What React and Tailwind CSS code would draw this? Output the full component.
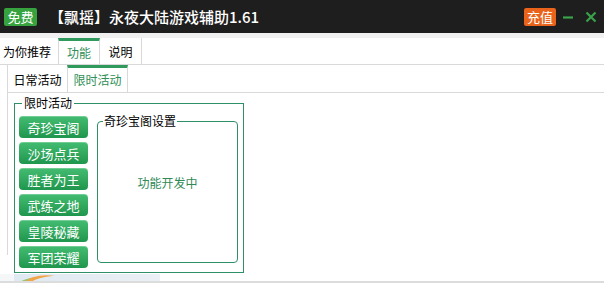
import React from "react";

const FONT = { fontFamily: '"Noto Sans CJK SC", "Liberation Sans", sans-serif' };

const activities = ["奇珍宝阁", "沙场点兵", "胜者为王", "武练之地", "皇陵秘藏", "军团荣耀"];

const TitleBar = () => (
  <div className="flex h-[33px] items-center bg-[#1e1e1e] pl-[4px] pr-[7px]">
    <span className="flex h-[18px] w-[33px] items-center justify-center rounded-[2px] bg-[#36a33f] text-[13px] leading-none text-white">
      免费
    </span>
    <span className="ml-[12px] text-[15px] font-medium leading-none text-white">
      【飘摇】永夜大陆游戏辅助1.61
    </span>
    <span className="ml-auto flex h-[18px] w-[32px] items-center justify-center rounded-[2px] bg-[#e9631b] text-[13px] leading-none text-white">
      充值
    </span>
    <svg width="12" height="12" viewBox="0 0 12 12" className="ml-[6px]">
      <path d="M1 6.5h10" stroke="#39a24a" strokeWidth="2.2" />
    </svg>
    <svg width="12" height="12" viewBox="0 0 12 12" className="ml-[11px]">
      <path d="M1.5 1.5l9 9M10.5 1.5l-9 9" stroke="#39a24a" strokeWidth="2.2" />
    </svg>
  </div>
);

const OuterTabs = () => (
  <div className="flex h-[27px] border-b border-[#d9d9d9] text-[12px] text-black">
    <div className="flex w-[58px] items-center pl-[3px] pt-[2px]">为你推荐</div>
    <div className="flex w-[42px] items-center justify-center border-x border-[#d9d9d9] border-t-[3px] border-t-[#2f9a5c] bg-white text-[#2f8f57]">
      功能
    </div>
    <div className="flex w-[42px] items-center justify-center border-r border-[#d9d9d9] pt-[2px]">
      说明
    </div>
  </div>
);

const InnerTabs = () => (
  <div className="flex h-[28px] border-b border-[#d9d9d9] text-[12px] text-black">
    <div className="flex w-[59px] items-center justify-center pt-[2px]">日常活动</div>
    <div className="flex w-[61px] items-center justify-center border-x border-[#d9d9d9] border-t-[3px] border-t-[#2f9a5c] text-[#2f8f57]">
      限时活动
    </div>
  </div>
);

const ActivityButton = ({ label }) => (
  <button
    type="button"
    className="flex h-[22px] w-[69px] items-center justify-center rounded-[4px] bg-gradient-to-b from-[#43bd72] to-[#1f964d] text-[13px] leading-none text-white shadow-[inset_0_1px_0_rgba(255,255,255,0.25)]"
  >
    {label}
  </button>
);

const App = () => {
  return (
    <div className="relative h-[283px] w-[604px] overflow-hidden bg-white" style={FONT}>
      <TitleBar />
      <div className="h-[5px] bg-[#f0f0f0]" />
      <OuterTabs />

      <div className="ml-[7px] h-[190px] border-l border-[#d9d9d9]">
        <InnerTabs />

        <fieldset className="ml-[6px] mt-[3px] h-[177px] w-[230px] border border-[#2f9068] px-[4px] pt-[6px]">
          <legend className="ml-[3px] px-[2px] text-[12px] leading-[14px] text-black">限时活动</legend>
          <div className="flex items-start">
            <div className="flex flex-col gap-[4px]">
              {activities.map((item) => (
                <ActivityButton key={item} label={item} />
              ))}
            </div>

            <fieldset className="ml-[9px] mt-[-2px] h-[149px] w-[141px] rounded-[4px] border border-[#2f9068]">
              <legend className="ml-[5px] px-[1px] text-[12px] leading-[14px] text-black">奇珍宝阁设置</legend>
              <div className="flex h-[110px] items-center justify-center text-[12px] text-[#2f8a55]">
                功能开发中
              </div>
            </fieldset>
          </div>
        </fieldset>
      </div>

      <div className="absolute bottom-0 left-0 flex h-[9px] w-full">
        <div className="w-[14px] bg-[#f4f6f8]" />
        <div className="relative w-[146px] bg-gradient-to-r from-[#dfe9f1] to-[#eaf0f5]">
          <svg width="46" height="9" viewBox="0 0 46 10" className="absolute left-[2px] top-0">
            <path d="M4 10 C12 3, 26 0, 40 2 C28 3, 18 6, 12 10 Z" fill="#f2a548" />
            <path d="M0 10 C6 6, 10 5, 14 5 C10 7, 8 8, 6 10 Z" fill="#9cc46a" />
          </svg>
        </div>
        <div className="flex-1 bg-white" />
      </div>
      <div className="absolute bottom-0 left-0 h-[2px] w-full bg-[#dcdcdc]" />
    </div>
  );
};

export default App;
